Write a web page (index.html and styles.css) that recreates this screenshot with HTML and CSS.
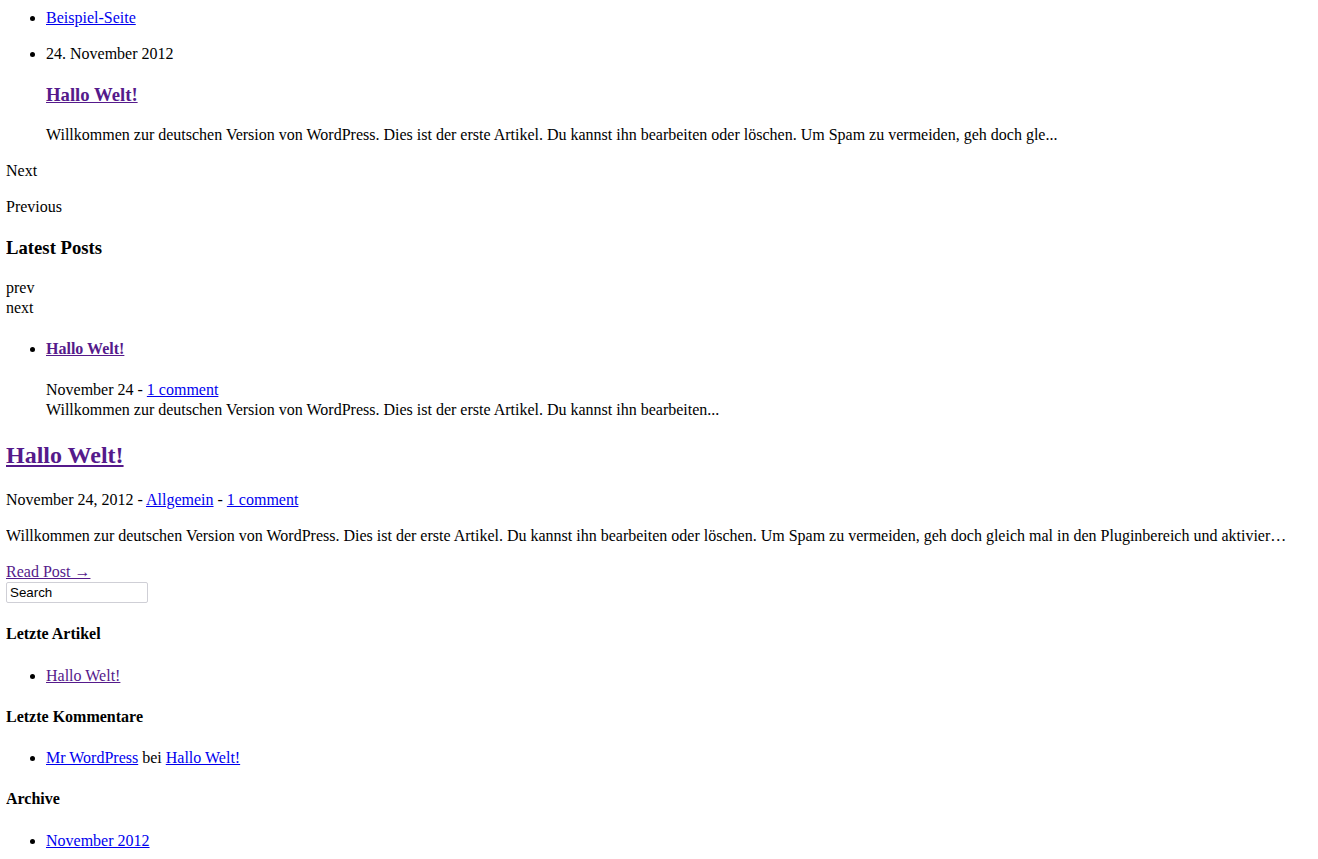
FILE: index.html
```html
<!DOCTYPE html>
<html lang="de">
<head>
    <meta charset="UTF-8">
    <meta name="viewport" content="width=device-width, initial-scale=1.0">
    <title>Hallo Welt!</title>
    <link rel="stylesheet" href="styles.css">
</head>
<body>
    <ul class="pages">
        <li><a href="#">Beispiel-Seite</a></li>
    </ul>

    <ul class="slider">
        <li>24. November 2012
            <h3><a class="seen" href="#">Hallo Welt!</a></h3>
            <p>Willkommen zur deutschen Version von WordPress. Dies ist der erste Artikel. Du kannst ihn bearbeiten oder löschen. Um Spam zu vermeiden, geh doch gle...</p>
        </li>
    </ul>
    <p>Next</p>
    <p>Previous</p>

    <div class="latest">
        <h3>Latest Posts</h3>
        <div class="latest-nav">
            <div>prev</div>
            <div>next</div>
        </div>
        <ul>
            <li>
                <h4><a class="seen" href="#">Hallo Welt!</a></h4>
                <div>November 24 - <a href="#">1 comment</a></div>
                <div>Willkommen zur deutschen Version von WordPress. Dies ist der erste Artikel. Du kannst ihn bearbeiten...</div>
            </li>
        </ul>
    </div>

    <div class="post">
        <h2><a class="seen" href="#">Hallo Welt!</a></h2>
        <p>November 24, 2012 - <a href="#">Allgemein</a> - <a href="#">1 comment</a></p>
        <p>Willkommen zur deutschen Version von WordPress. Dies ist der erste Artikel. Du kannst ihn bearbeiten oder löschen. Um Spam zu vermeiden, geh doch gleich mal in den Pluginbereich und aktivier…</p>
        <a class="seen" href="#">Read Post →</a>
    </div>

    <form class="search">
        <input type="text" value="Search">
    </form>

    <div class="widget">
        <h4>Letzte Artikel</h4>
        <ul>
            <li><a class="seen" href="#">Hallo Welt!</a></li>
        </ul>
    </div>
    <div class="widget">
        <h4>Letzte Kommentare</h4>
        <ul>
            <li><a href="#">Mr WordPress</a> bei <a href="#">Hallo Welt!</a></li>
        </ul>
    </div>
    <div class="widget">
        <h4>Archive</h4>
        <ul>
            <li><a href="#">November 2012</a></li>
        </ul>
    </div>
</body>
</html>
```

FILE: styles.css
```css
body {
    font-family: "Liberation Serif", "Times New Roman", serif;
    font-size: 16px;
    line-height: 1.25;
    margin: 8px 6px;
    color: #000;
    background: #fff;
}
a {
    color: #0000ee;
}
a.seen {
    color: #551a8b;
}
.pages {
    margin-top: 0;
}
.search {
    margin: 0;
}
.search input {
    font-family: "Liberation Sans", Arial, sans-serif;
    font-size: 13.33px;
    width: 134px;
    height: 17px;
    padding: 1px 3px;
    margin: 0;
    border: 1px solid #cfcfd6;
    border-radius: 2px;
    color: #000;
    display: block;
}
```
